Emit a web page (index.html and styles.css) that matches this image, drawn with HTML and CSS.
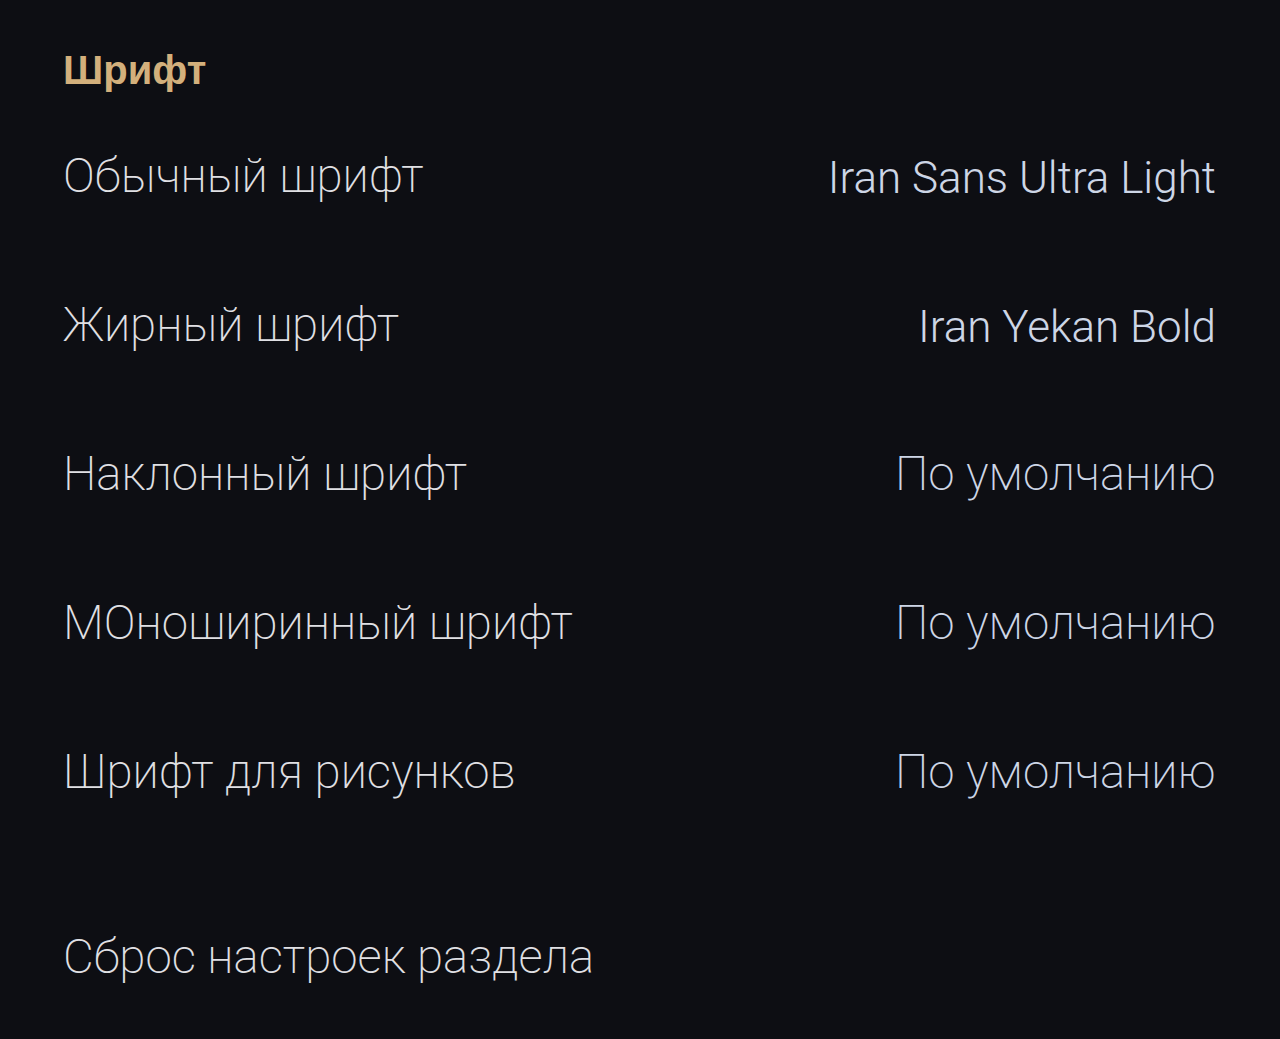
FILE: index.html
```html
<!DOCTYPE html>
<html lang="ru">
<head>
  <meta charset="UTF-8">
  <title>Шрифт</title>
  <link rel="stylesheet" href="styles.css">
</head>
<body>

<div class="settings">
  <h2 class="section-title">Шрифт</h2>

  <div class="row">
    <div class="label">Обычный шрифт</div>
    <div class="value font-name">Iran Sans Ultra Light</div>
  </div>
  <div class="row">
    <div class="label">Жирный шрифт</div>
    <div class="value font-name">Iran Yekan Bold</div>
  </div>
  <div class="row">
    <div class="label">Наклонный шрифт</div>
    <div class="value">По умолчанию</div>
  </div>
  <div class="row">
    <div class="label">МОноширинный шрифт</div>
    <div class="value">По умолчанию</div>
  </div>
  <div class="row">
    <div class="label">Шрифт для рисунков</div>
    <div class="value">По умолчанию</div>
  </div>

  <div class="row reset">
    <div class="label">Сброс настроек раздела</div>
  </div>
</div>

</body>
</html>
```

FILE: styles.css
```css
* {
  margin: 0; padding: 0; box-sizing: border-box;
}
body {
  font-family: Roboto, 'Noto Sans', sans-serif;
  background: #0d0e13;
  color: #e0e0e4;
  height: 100vh;
}

.settings {
  padding: 48px 64px 0 63px;
}

.section-title {
  font-family: 'Liberation Sans', Arial, sans-serif;
  font-size: 40px;
  font-weight: 700;
  color: #d3b07c;
  height: 53px;
}

.row {
  display: flex;
  justify-content: space-between;
  align-items: center;
  height: 149px;
}

.label {
  font-size: 47.4px;
  font-weight: 200;
}

.value {
  font-size: 47.4px;
  font-weight: 200;
  color: #cdd6e6;
}

.value.font-name {
  font-size: 44px;
  font-weight: 300;
  padding-top: 4px;
}

.reset {
  margin-top: 36px;
}
```
